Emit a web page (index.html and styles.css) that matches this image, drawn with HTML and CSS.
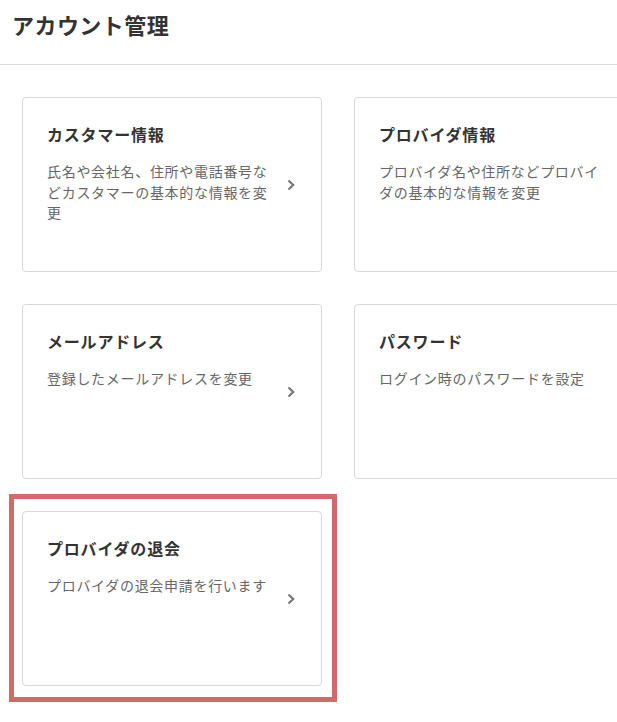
FILE: index.html
```html
<!DOCTYPE html>
<html lang="ja">
<head>
<meta charset="utf-8">
<title>アカウント管理</title>
<link rel="stylesheet" href="styles.css">
</head>
<body>
<header class="page-header">
  <h1 class="page-title">アカウント管理</h1>
</header>
<main class="card-grid">
  <a class="card" href="#">
    <div class="card-body">
      <h2 class="card-title">カスタマー情報</h2>
      <p class="card-desc">氏名や会社名、住所や電話番号などカスタマーの基本的な情報を変更</p>
    </div>
    <svg class="chevron" width="8" height="12" viewBox="0 0 8 12"><path d="M1.5 1.5 L6.2 6 L1.5 10.5" fill="none" stroke="#777" stroke-width="2.2"/></svg>
  </a>
  <a class="card" href="#">
    <div class="card-body">
      <h2 class="card-title">プロバイダ情報</h2>
      <p class="card-desc">プロバイダ名や住所などプロバイダの基本的な情報を変更</p>
    </div>
    <svg class="chevron" width="8" height="12" viewBox="0 0 8 12"><path d="M1.5 1.5 L6.2 6 L1.5 10.5" fill="none" stroke="#777" stroke-width="2.2"/></svg>
  </a>
  <a class="card" href="#">
    <div class="card-body">
      <h2 class="card-title">メールアドレス</h2>
      <p class="card-desc">登録したメールアドレスを変更</p>
    </div>
    <svg class="chevron" width="8" height="12" viewBox="0 0 8 12"><path d="M1.5 1.5 L6.2 6 L1.5 10.5" fill="none" stroke="#777" stroke-width="2.2"/></svg>
  </a>
  <a class="card" href="#">
    <div class="card-body">
      <h2 class="card-title">パスワード</h2>
      <p class="card-desc">ログイン時のパスワードを設定</p>
    </div>
    <svg class="chevron" width="8" height="12" viewBox="0 0 8 12"><path d="M1.5 1.5 L6.2 6 L1.5 10.5" fill="none" stroke="#777" stroke-width="2.2"/></svg>
  </a>
  <a class="card card-highlight" href="#">
    <div class="card-body">
      <h2 class="card-title">プロバイダの退会</h2>
      <p class="card-desc">プロバイダの退会申請を行います</p>
    </div>
    <svg class="chevron" width="8" height="12" viewBox="0 0 8 12"><path d="M1.5 1.5 L6.2 6 L1.5 10.5" fill="none" stroke="#777" stroke-width="2.2"/></svg>
  </a>
</main>
</body>
</html>
```
FILE: styles.css
```css
html {
  overflow: hidden;
}
html, body {
  margin: 0;
  padding: 0;
  background: #fff;
}
body {
  font-family: "Noto Sans CJK JP", "Noto Sans", sans-serif;
  color: #333;
}
.page-header {
  height: 64px;
  border-bottom: 1px solid #dcdcdc;
  padding-left: 12px;
}
.page-title {
  margin: 0;
  padding-top: 8px;
  font-size: 22px;
  line-height: 32px;
  font-weight: 700;
  letter-spacing: 0.02em;
  color: #333;
}
.card-grid {
  display: grid;
  grid-template-columns: 300px 300px;
  grid-auto-rows: 175px;
  gap: 32px;
  padding: 32px 0 30px 22px;
  width: 700px;
}
.card {
  position: relative;
  display: flex;
  align-items: center;
  box-sizing: border-box;
  border: 1px solid #d9d9d9;
  border-radius: 4px;
  padding: 24px 26px 24px 24px;
  text-decoration: none;
  color: inherit;
  background: #fff;
}
.card-body {
  flex: 1;
  align-self: flex-start;
  margin-right: 14px;
}
.card-title {
  margin: 0;
  font-size: 16px;
  line-height: 24px;
  font-weight: 700;
  letter-spacing: 0.05em;
  color: #333;
}
.card-desc {
  margin: 15px 0 0;
  font-size: 14px;
  line-height: 20.5px;
  letter-spacing: 0.05em;
  color: #666;
}
.chevron {
  flex: none;
  display: block;
}
.card-highlight::after {
  content: "";
  position: absolute;
  top: -18px;
  left: -14px;
  right: -16px;
  bottom: -17px;
  border: 5px solid #d16a6a;
  pointer-events: none;
}
```
